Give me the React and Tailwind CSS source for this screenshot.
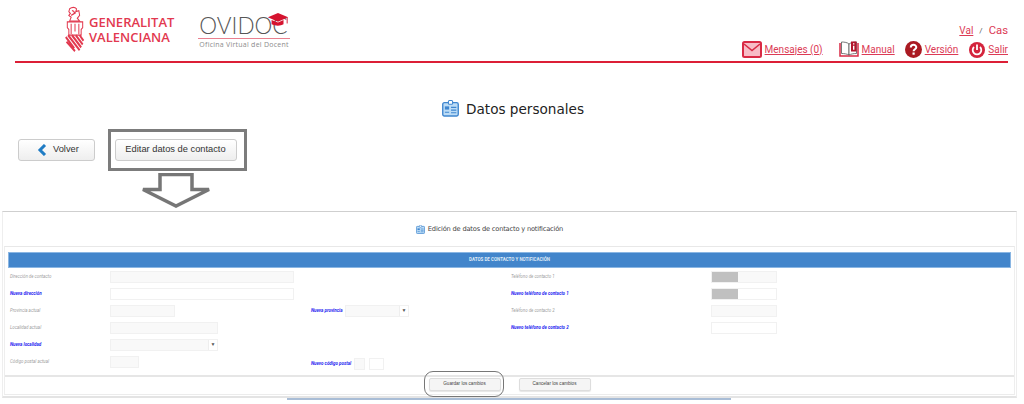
import React from "react";

const Red = "text-[#dc3a55]";

function Escudo() {
  return (
    <svg width="20" height="47" viewBox="0 0 26 50" preserveAspectRatio="none" className="shrink-0">
      <g fill="none" stroke="#e2394f" strokeWidth="1.300">
        <path d="M6 3c3-2 7-2 9 0l-1 3 4-1 1 5-3 3 3 3H6l2-4-3-2 2-2-2-2z" />
        <path d="M9 5c3 0 4 2 2 4M8 10l6-3" />
        <path d="M3 17h20v6l-2 2v6H5v-6l-2-2z" />
        <path d="M8 19v11M13 19v8M18 19v11" />
      </g>
      <g stroke="#e2394f" strokeWidth="2.400" fill="none">
        <path d="M1 33l11 12M2 38l11 10" />
        <path d="M4 31l15 16M9 31l12 13M14 31l9 10M19 31l5 6" />
      </g>
    </svg>
  );
}

function Birrete() {
  return (
    <svg width="22" height="15" viewBox="0 0 24 17" preserveAspectRatio="none" className="absolute left-[69px] top-[-1px]">
      <path d="M12 1L23 6 12 11 1 6z" fill="#d5132f" />
      <path d="M5 9v5c4 2 10 2 13 0V9l-6 3z" fill="#d5132f" />
      <path d="M22 6v7" stroke="#d5132f" strokeWidth="1" />
    </svg>
  );
}

function Mail() {
  return (
    <svg width="20" height="17" viewBox="0 0 20 17">
      <rect x="1" y="1" width="18" height="15" rx="1.500" fill="#f7bcc6" stroke="#d92a45" strokeWidth="2" />
      <path d="M2 3l8 6.500L18 3" fill="none" stroke="#d92a45" strokeWidth="1.600" />
    </svg>
  );
}

function Book() {
  return (
    <svg width="20" height="17" viewBox="0 0 20 17">
      <path d="M1 2v13h18V2" fill="none" stroke="#d92a45" strokeWidth="1.500" />
      <path d="M2.500 1c3 0 6 .5 7.500 2v11c-2-1-4.500-1.500-7.500-1.500z" fill="#fff" stroke="#555" strokeWidth=".8" />
      <path d="M10 3c2-1.500 5-2 7.500-2v11.500c-3 0-5.500.5-7.500 1.500z" fill="#fff" stroke="#555" strokeWidth=".8" />
      <rect x="12" y="0.500" width="5.500" height="10" fill="#b3162c" />
      <path d="M14.700 2.200v1.300M14.700 4.700v4" stroke="#fff" strokeWidth="1.400" />
    </svg>
  );
}

function Help() {
  return (
    <svg width="17" height="17" viewBox="0 0 17 17">
      <circle cx="8.500" cy="8.500" r="8.500" fill="#aa1a22" />
      <path d="M5.800 6.500c0-3.500 5.500-3.500 5.500-.2 0 2-2.700 2-2.700 4" fill="none" stroke="#fff" strokeWidth="2" />
      <rect x="7.500" y="11.500" width="2.200" height="2.200" fill="#fff" />
    </svg>
  );
}

function Power() {
  return (
    <svg width="16" height="16" viewBox="0 0 16 16">
      <circle cx="8" cy="8" r="8" fill="#d4243c" />
      <path d="M5 5a4.300 4.300 0 1 0 6 0" fill="none" stroke="#fff" strokeWidth="1.800" />
      <path d="M8 2.500v5.500" stroke="#fff" strokeWidth="1.800" />
    </svg>
  );
}

function IdCard({ size = 16 }) {
  return (
    <svg width={size} height={size} viewBox="0 0 16 16" className="shrink-0">
      <rect x="0.700" y="2.500" width="14.600" height="12.500" rx="1.500" fill="#bcdcf6" stroke="#3f86cf" strokeWidth="1.300" />
      <rect x="6" y="0.500" width="4" height="3.500" rx="1" fill="#fff" stroke="#3f86cf" strokeWidth="1" />
      <rect x="2.700" y="6" width="4" height="3" fill="#3f86cf" />
      <path d="M2.700 11.500h4M8.500 7h5M8.500 9.500h5M8.500 12h5" stroke="#3f86cf" strokeWidth="1.100" />
    </svg>
  );
}

function Link({ icon, children, className = "" }) {
  return (
    <div className={`flex items-center ${className}`}>
      {icon}
      <span className={`ml-[3px] underline text-[10px] leading-[16px] ${Red} font-['Roboto',sans-serif]`}>{children}</span>
    </div>
  );
}

function Header() {
  return (
    <header className="mx-[15px] w-[993px] h-[62.500px] border-b-[2.500px] border-[#dc1f36] flex justify-between">
      <div className="flex items-start">
        <div className="ml-[50px] mt-[6px]">
          <Escudo />
        </div>
        <div className="ml-[4px] mt-[15px] text-[#e2394f] font-['Open_Sans',sans-serif] font-semibold text-[13px] leading-[14.500px]">
          <div>GENERALITAT</div>
          <div>VALENCIANA</div>
        </div>
        <div className="relative ml-[24px] mt-[13px] w-[92px]">
          <Birrete />
          <div className="pl-px text-[#565656] font-['Lato',sans-serif] font-light text-[22.500px] leading-[25px] h-[25px]">OVIDOC</div>
          <div className="h-px bg-[#e9808f]" />
          <div className="pl-px text-[#8c8c8c] font-['Open_Sans',sans-serif] text-[7px] leading-[11px] tracking-[0.250px] whitespace-nowrap">Oficina Virtual del Docent</div>
        </div>
      </div>
      <div className="flex flex-col items-end pt-[23px]">
        <div className={`flex items-center leading-[15px] font-['Roboto',sans-serif] ${Red}`}>
          <span className="underline text-[10px]">Val</span>
          <span className="mx-[6px] text-[8px] text-[#555]">/</span>
          <span className="text-[11.300px]">Cas</span>
        </div>
        <div className="flex items-center mt-[3px]">
          <Link icon={<Mail />}>Mensajes (0)</Link>
          <Link icon={<Book />} className="ml-[16px]">Manual</Link>
          <Link icon={<Help />} className="ml-[10px]">Versión</Link>
          <Link icon={<Power />} className="ml-[11px]">Salir</Link>
        </div>
      </div>
    </header>
  );
}

function Lbl({ blue, children }) {
  return (
    <span
      className={
        blue
          ? "block pl-[2px] text-[4.500px] leading-[8px] font-['Roboto',sans-serif] font-bold italic text-[#2525f0] whitespace-nowrap"
          : "block pl-[2px] text-[4.400px] leading-[8px] font-['Roboto',sans-serif] italic text-[#a0a0a0] whitespace-nowrap"
      }
    >
      {children}
    </span>
  );
}

function Field({ w, white, children }) {
  return (
    <div className={`h-[12px] border border-[#f1f1f1] ${white ? "bg-white" : "bg-[#f9f9f9]"} ${w} flex`}>{children}</div>
  );
}

function Select({ w }) {
  return (
    <div className={`h-[12px] border border-[#f1f1f1] bg-[#f9f9f9] ${w} flex justify-end`}>
      <div className="w-[9px] bg-white border-l border-[#eeeeee] flex items-center justify-center text-[5px] leading-none text-[#555]">▼</div>
    </div>
  );
}

function Row({ h, c1, c2, c3, c4, c5 }) {
  return (
    <div className={`grid grid-cols-[102px_199px_200px_202px_1fr] items-center ${h}`}>
      {c1 ? <div>{c1}</div> : <div />}
      {c2 ? <div>{c2}</div> : <div />}
      {c3 ? <div>{c3}</div> : <div />}
      {c4 ? <div>{c4}</div> : <div />}
      {c5 ? <div>{c5}</div> : <div />}
    </div>
  );
}

function Masked({ white }) {
  return (
    <Field w="w-[66px]" white={white}>
      <div className="w-[26px] h-full bg-[#c0c0c0]" />
    </Field>
  );
}

function SmallBtn({ children }) {
  return (
    <div className="w-[72px] h-[13px] border border-[#dddddd] rounded-[2px] bg-[#f5f5f5] flex items-center justify-center text-[4.600px] text-[#444] font-['Liberation_Sans',sans-serif] shadow-[0_1px_1px_rgba(0,0,0,0.1)]">
      {children}
    </div>
  );
}

function Panel() {
  return (
    <section className="relative ml-[2px] w-[1015px] h-[187px] border-t border-[#cfcfcf] border-x border-x-[#eeeeee] border-b-2 border-b-[#e4e4e4] bg-white">
      <div className="h-[34px] flex items-center justify-center pr-[40px]">
        <IdCard size={9} />
        <span className="ml-[3px] text-[6.700px] leading-[10px] font-['DejaVu_Sans',sans-serif] text-[#444] tracking-[-0.200px] whitespace-nowrap">Edición de datos de contacto y notificación</span>
      </div>
      <div className="ml-px mr-px border-t border-[#e8e8e8] border-x border-x-[#eeeeee] border-b border-b-[#ececec] h-[149px] flex flex-col">
        <div className="mx-[3px] mt-[5px] h-[16px] shrink-0 bg-[#4285cb] border border-[#8ab6e3] flex items-center justify-center text-[4.500px] font-bold text-[#dfeaf6] font-['Roboto',sans-serif]">
          DATOS DE CONTACTO Y NOTIFICACIÓN
        </div>
        <div className="ml-[3px] flex-1">
          <Row h="h-[17px]" c1={<Lbl>Dirección de contacto</Lbl>} c2={<Field w="w-[184px]" />} c4={<Lbl>Teléfono de contacto 1</Lbl>} c5={<Masked />} />
          <Row h="h-[17px]" c1={<Lbl blue>Nueva dirección</Lbl>} c2={<Field w="w-[184px]" white />} c4={<Lbl blue>Nuevo teléfono de contacto 1</Lbl>} c5={<Masked white />} />
          <Row
            h="h-[17px]"
            c1={<Lbl>Provincia actual</Lbl>}
            c2={<Field w="w-[65px]" />}
            c3={
              <div className="flex items-center">
                <div className="w-[36px]"><Lbl blue>Nueva provincia</Lbl></div>
                <Select w="w-[64px]" />
              </div>
            }
            c4={<Lbl>Teléfono de contacto 2</Lbl>}
            c5={<Field w="w-[66px]" />}
          />
          <Row h="h-[17px]" c1={<Lbl>Localidad actual</Lbl>} c2={<Field w="w-[108px]" />} c4={<Lbl blue>Nuevo teléfono de contacto 2</Lbl>} c5={<Field w="w-[66px]" white />} />
          <Row h="h-[17px]" c1={<Lbl blue>Nueva localidad</Lbl>} c2={<Select w="w-[108px]" />} />
          <Row
            h="h-[18px]"
            c1={<Lbl>Código postal actual</Lbl>}
            c2={<Field w="w-[29px]" />}
            c3={
              <div className="flex items-center mt-[4px]">
                <div className="w-[45px]"><Lbl blue>Nuevo código postal</Lbl></div>
                <Field w="w-[11px]" />
                <div className="ml-[4px]"><Field w="w-[15px]" white /></div>
              </div>
            }
          />
        </div>
        <div className="border-t-2 border-[#e6e6e6] h-[19px] shrink-0 flex justify-center gap-[18px] pt-[1px]">
          <SmallBtn>Guardar los cambios</SmallBtn>
          <SmallBtn>Cancelar los cambios</SmallBtn>
        </div>
      </div>
      <div className="absolute left-[421px] top-[159px] w-[80px] h-[26px] border-[1.500px] border-[#777777] rounded-[9px]" />
    </section>
  );
}

export default function App() {
  return (
    <div className="w-[1024px] h-[404px] bg-white overflow-hidden">
      <Header />
      <div className="h-[66.500px] pt-[36px] flex justify-center items-start">
        <div className="flex items-center ml-[2px]">
          <IdCard size={17} />
          <h1 className="ml-[7px] text-[13.600px] leading-[20px] font-['DejaVu_Sans',sans-serif] text-[#222]">Datos personales</h1>
        </div>
      </div>
      <div className="flex items-center h-[42px] font-['Liberation_Sans',sans-serif] text-[9.300px] text-[#333]">
        <button className="ml-[18px] w-[77px] h-[22px] border border-[#cccccc] rounded-[3px] bg-gradient-to-b from-white to-[#eeeeee] flex items-center pl-[18px]">
          <svg width="10" height="12" viewBox="0 0 10 12"><path d="M8 1L3 6l5 5" fill="none" stroke="#1f7cc4" strokeWidth="3" /></svg>
          <span className="ml-[6px]">Volver</span>
        </button>
        <div className="ml-[13px] w-[139px] h-[42px] border-[3.500px] border-[#7c7c7c] flex items-center pl-[3.500px]">
          <button className="w-[122px] h-[22px] border border-[#cccccc] rounded-[3px] bg-gradient-to-b from-white to-[#eeeeee] whitespace-nowrap">Editar datos de contacto</button>
        </div>
      </div>
      <div className="ml-[141px] h-[40px] pt-[2px]">
        <svg width="70" height="36" viewBox="0 0 70 36" className="block">
          <path d="M19 1.500h32v15h17L35 33 2 16.500h17z" fill="#fff" stroke="#767676" strokeWidth="3.500" />
        </svg>
      </div>
      <Panel />
      <div className="ml-[287px] w-[444px] h-[2px] bg-[#a9bdd6]" />
    </div>
  );
}
